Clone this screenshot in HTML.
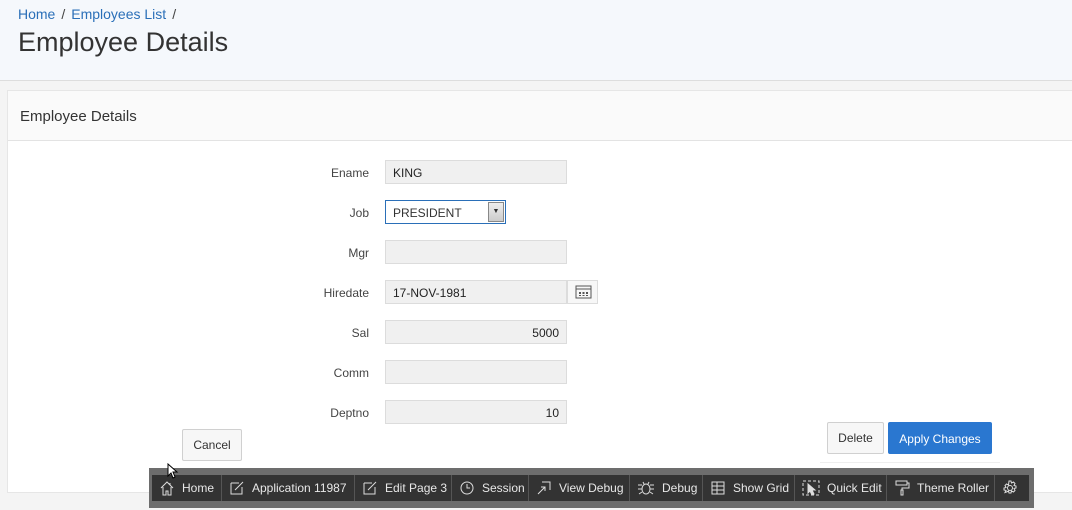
<!DOCTYPE html>
<html><head><meta charset="utf-8"><style>
*{box-sizing:border-box;margin:0;padding:0}
body{width:1072px;height:510px;overflow:hidden;background:#f4f4f4;font-family:"Liberation Sans",sans-serif;position:relative;font-size:12px;color:#333}
.hdr{position:absolute;left:0;top:0;width:1072px;height:81px;background:#f5f8fc;border-bottom:1px solid #ddd}
.bc{position:absolute;left:18px;top:6px;font-size:14px;color:#2a6fb8}
.bc span{color:#444;margin:0 6px}
.h1{position:absolute;left:18px;top:27px;font-size:27px;color:#333}
.reg{position:absolute;left:7px;top:90px;width:1075px;height:403px;background:#fff;border:1px solid #e6e6e6}
.rh{height:50px;background:#fafafa;border-bottom:1px solid #e3e3e3;padding:17px 0 0 12px;font-size:15px;color:#333}
.lbl{position:absolute;width:100px;text-align:right;left:269px;font-size:12px;color:#444}
.in{position:absolute;left:385px;width:182px;height:24px;background:#f0f0f0;border:1px solid #dcdcdc;font-size:12px;padding:5px 7px;color:#222}
.btn{position:absolute;border:1px solid #d0d0d0;background:#f7f7f7;font-size:12px;color:#333;text-align:center;border-radius:2px}
.tb{position:absolute;left:149px;top:468px;width:885px;height:40px;background:#6d6d6d}
.bar{position:absolute;left:3px;top:7px;width:877px;height:26px;background:#333;display:flex;align-items:center;color:#e8e8e8;font-size:12px}
.it{display:flex;align-items:center;height:100%;padding:0 0 0 7px;border-right:1px solid #555;white-space:nowrap;flex:none;overflow:hidden}
.it svg{margin-right:7px;flex:none}
</style></head><body>
<div class="hdr"><div class="bc">Home<span>/</span>Employees List<span>/</span></div><div class="h1">Employee Details</div></div>
<div class="reg"><div class="rh">Employee Details</div></div>
<div class="lbl" style="top:166px">Ename</div><div class="in" style="top:160px">KING</div>
<div class="lbl" style="top:206px">Job</div>
<div style="position:absolute;left:385px;top:200px;width:121px;height:24px;background:#fff;border:1px solid #2a6fb8;font-size:12px;padding:5px 7px">PRESIDENT<div style="position:absolute;right:1px;top:1px;width:16px;height:20px;background:linear-gradient(#eee,#ccc);border:1px solid #888;font-size:7px;text-align:center;line-height:18px">▼</div></div>
<div class="lbl" style="top:246px">Mgr</div><div class="in" style="top:240px"></div>
<div class="lbl" style="top:286px">Hiredate</div><div class="in" style="top:280px">17-NOV-1981</div>
<div style="position:absolute;left:567px;top:280px;width:31px;height:24px;background:#f7f7f7;border:1px solid #dcdcdc"><svg width="31" height="22" viewBox="0 0 31 22"><rect x="8" y="5" width="15" height="12" fill="none" stroke="#555"/><line x1="8" y1="8" x2="23" y2="8" stroke="#555"/><g fill="#555"><rect x="11" y="11" width="2" height="2"/><rect x="14.5" y="11" width="2" height="2"/><rect x="18" y="11" width="2" height="2"/><rect x="11" y="14" width="2" height="1"/><rect x="14.5" y="14" width="2" height="1"/><rect x="18" y="14" width="2" height="1"/></g></svg></div>
<div class="lbl" style="top:326px">Sal</div><div class="in" style="top:320px;text-align:right">5000</div>
<div class="lbl" style="top:366px">Comm</div><div class="in" style="top:360px"></div>
<div class="lbl" style="top:406px">Deptno</div><div class="in" style="top:400px;text-align:right">10</div>
<div class="btn" style="left:182px;top:429px;width:60px;height:32px;line-height:30px">Cancel</div>
<div class="btn" style="left:827px;top:422px;width:57px;height:32px;line-height:30px">Delete</div>
<div class="btn" style="left:888px;top:422px;width:104px;height:32px;line-height:32px;background:#2a77d0;border-color:#2a77d0;color:#fff">Apply Changes</div>
<div style="position:absolute;left:820px;top:462px;width:180px;height:1px;background:#eee"></div>
<div class="tb"><div class="bar">
<div class="it" style="width:70px"><svg width="16" height="16" viewBox="0 0 16 16" fill="none" stroke="#ddd"><path d="M2 8L8 2l6 6M4 7v8h3v-4h2v4h3V7M11 3v2"/></svg>Home</div>
<div class="it" style="width:133px"><svg width="16" height="16" viewBox="0 0 16 16" fill="none" stroke="#ddd"><path d="M2 3h8M2 3v11h11V7M6 10l8-8"/></svg>Application 11987</div>
<div class="it" style="width:97px"><svg width="16" height="16" viewBox="0 0 16 16" fill="none" stroke="#ddd"><path d="M2 3h8M2 3v11h11V7M6 10l8-8"/></svg>Edit Page 3</div>
<div class="it" style="width:77px"><svg width="16" height="16" viewBox="0 0 16 16" fill="none" stroke="#ddd"><circle cx="8" cy="8" r="6"/><path d="M8 4v4h3"/></svg>Session</div>
<div class="it" style="width:101px"><svg width="16" height="16" viewBox="0 0 16 16" fill="none" stroke="#ddd"><path d="M6 2h8v8M2 14l7-7M5 7h4v4"/></svg>View Debug</div>
<div class="it" style="width:73px"><svg width="18" height="16" viewBox="0 0 18 16" fill="none" stroke="#ddd"><ellipse cx="9" cy="9" rx="4" ry="5"/><path d="M1 5h4M13 5h4M1 9h4M13 9h4M2 14l3-2M16 14l-3-2M6 2l1 2M12 2l-1 2"/></svg>Debug</div>
<div class="it" style="width:92px"><svg width="16" height="16" viewBox="0 0 16 16" fill="none" stroke="#ddd"><rect x="2" y="2" width="12" height="12"/><path d="M2 6h12M2 10h12M7 2v12"/></svg>Show Grid</div>
<div class="it" style="width:92px"><svg width="18" height="16" viewBox="0 0 18 16" fill="none" stroke="#ddd" stroke-dasharray="3 2"><rect x="1" y="1" width="16" height="14"/><path d="M6 4l0 9 2-2 2 4 2-1-2-4h3z" stroke-dasharray="none" fill="#ddd"/></svg>Quick Edit</div>
<div class="it" style="width:108px"><svg width="16" height="16" viewBox="0 0 16 16" fill="none" stroke="#ddd"><rect x="2" y="1" width="11" height="4"/><path d="M13 3h2v5H8v2M7 10h2v5H7z"/></svg>Theme Roller</div>
<div class="it" style="width:34px;border:none"><svg width="16" height="16" viewBox="0 0 16 16" fill="none" stroke="#ddd"><circle cx="8" cy="8" r="2.5"/><path d="M7 1h2l.5 2 2-1 1.5 1.5-1 2 2 .5v2l-2 .5 1 2-1.5 1.5-2-1-.5 2H7l-.5-2-2 1L3 12.5l1-2-2-.5V8l2-.5-1-2L4.5 4l2 1z"/></svg></div>
</div></div>
<svg style="position:absolute;left:167px;top:463px" width="12" height="16" viewBox="0 0 12 16"><path d="M1 1v12l3-3 2 5 2-1-2-5h4z" fill="#fff" stroke="#000"/></svg>
</body></html>
